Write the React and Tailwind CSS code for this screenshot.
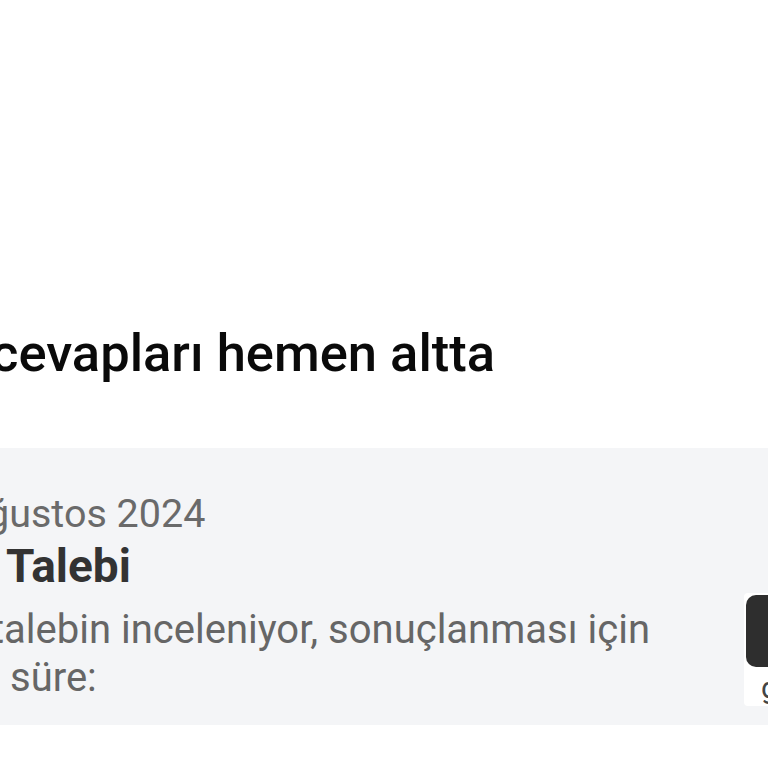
export default function App() {
  return (
    <div className="w-[768px] h-[768px] overflow-hidden bg-white font-['Roboto',sans-serif]">
      <h1 className="mt-[321px] ml-[-9px] whitespace-nowrap text-[52.5px] leading-[64px] font-medium text-[#0a0a0a]">
        cevapları hemen altta
      </h1>
      <div className="mt-[63px] h-[277px] bg-[#f4f5f7] flex">
        <div className="flex-1 pt-[45px] overflow-hidden">
          <div className="ml-[-13px] whitespace-nowrap text-[39.5px] leading-[41px] text-[#6a6a6a]">ğustos 2024</div>
          <div className="mt-[6px] ml-[6px] whitespace-nowrap text-[46px] leading-[52px] font-bold text-[#333333]">Talebi</div>
          <div className="mt-[14px] text-[40px] leading-[48px] text-[#666666] whitespace-nowrap">
            <div className="ml-[-9px]">talebin inceleniyor, sonuçlanması için</div>
            <div className="ml-[10px]">süre:</div>
          </div>
        </div>
        <div className="w-[24px] shrink-0 mt-[145px] h-[113px] bg-white rounded-l-[4px] pl-[2px] pt-[2px]">
          <div className="h-[72px] bg-[#2e2e2e] rounded-l-[10px]"></div>
          <div className="mt-[6px] ml-[15px] text-[30px] leading-[30px] text-[#444]">g</div>
        </div>
      </div>
    </div>
  );
}
